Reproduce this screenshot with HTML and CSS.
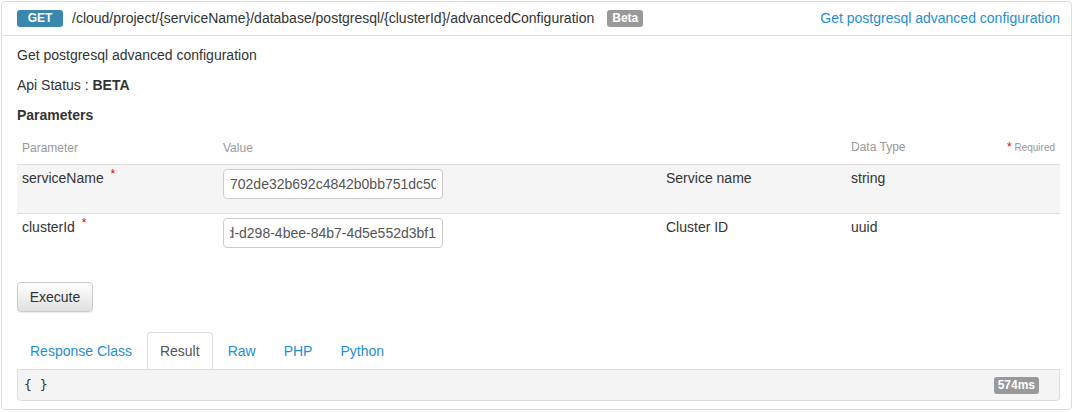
FILE: index.html
```html
<!DOCTYPE html>
<html>
<head>
<meta charset="utf-8">
<link rel="stylesheet" href="styles.css">
</head>
<body>
<div class="panel">
  <div class="panel-head">
    <span class="verb">GET</span>
    <span class="path">/cloud/project/{serviceName}/database/postgresql/{clusterId}/advancedConfiguration</span>
    <span class="badge beta">Beta</span>
    <a class="summary" href="#">Get postgresql advanced configuration</a>
  </div>
  <div class="panel-body">
    <p class="line">Get postgresql advanced configuration</p>
    <p class="line">Api Status : <strong>BETA</strong></p>
    <h4 class="line heading">Parameters</h4>
    <table class="params">
      <colgroup>
        <col class="c1"><col class="c2"><col class="c3"><col class="c4">
      </colgroup>
      <thead>
        <tr>
          <th>Parameter</th>
          <th>Value</th>
          <th></th>
          <th><div class="th-split"><span>Data Type</span><span class="req-note"><span class="star">*</span> Required</span></div></th>
        </tr>
      </thead>
      <tbody>
        <tr class="alt">
          <td>serviceName <sup class="star">*</sup></td>
          <td class="input-cell"><input class="field" type="text" value="702de32b692c4842b0bb751dc50"></td>
          <td>Service name</td>
          <td>string</td>
        </tr>
        <tr>
          <td>clusterId <sup class="star">*</sup></td>
          <td class="input-cell"><input class="field field-end" type="text" value="d-d298-4bee-84b7-4d5e552d3bf1"></td>
          <td>Cluster ID</td>
          <td>uuid</td>
        </tr>
      </tbody>
    </table>
    <button class="btn">Execute</button>
    <ul class="tabs">
      <li><a href="#">Response Class</a></li>
      <li class="active"><a href="#">Result</a></li>
      <li><a href="#">Raw</a></li>
      <li><a href="#">PHP</a></li>
      <li><a href="#">Python</a></li>
    </ul>
    <div class="result">
      <code class="json">{ }</code>
      <span class="badge time">574ms</span>
    </div>
  </div>
</div>
</body>
</html>
```

FILE: styles.css
```css
* { box-sizing: border-box; }
html, body { margin: 0; padding: 0; background: #fff; }
body {
  font-family: "Liberation Sans", Arial, sans-serif;
  font-size: 14px;
  line-height: 20px;
  color: #333;
}
.panel {
  margin: 1px;
  width: 1071px;
  height: 409px;
  border: 1px solid #ddd;
  border-radius: 4px;
}
.panel-head {
  display: flex;
  align-items: center;
  height: 34px;
  padding: 0 11px 1px 15px;
  border-bottom: 1px solid #ddd;
}
.verb {
  display: inline-block;
  width: 46px;
  height: 17px;
  line-height: 17px;
  text-align: center;
  background: #3a87ad;
  color: #fff;
  font-weight: bold;
  font-size: 12px;
  border-radius: 3px;
  margin-right: 9px;
}
.path { color: #333; font-size: 14px; }
.badge {
  display: inline-block;
  height: 17px;
  line-height: 17px;
  padding: 0 5px;
  background: #999;
  color: #fff;
  font-weight: bold;
  font-size: 12px;
  border-radius: 3px;
}
.beta { margin-left: 13px; }
.summary {
  margin-left: auto;
  color: #1f8ed2;
  text-decoration: none;
}
.panel-body { padding: 9px 10px 8px 15px; }
.line { margin: 0 0 10px; font-size: 14px; line-height: 20px; }
.heading { font-weight: bold; margin-bottom: 10px; }
.params {
  width: 1043px;
  border-collapse: collapse;
  table-layout: fixed;
}
.c1 { width: 201px; }
.c2 { width: 443px; }
.c3 { width: 185px; }
.c4 { width: 214px; }
.params th {
  text-align: left;
  font-weight: normal;
  font-size: 12px;
  line-height: 16px;
  color: #999;
  padding: 4px 5px 8px;
}
.th-split { display: flex; justify-content: space-between; }
.req-note { font-size: 10px; }
.star { color: #e00; font-size: 12px; }
.params td {
  vertical-align: top;
  border-top: 1px solid #ddd;
  padding: 3px 5px 15px;
  line-height: 20px;
}
.params td.input-cell { padding: 4px 5px 14px; }
.params tr.alt td { background: #f5f5f5; }
.params sup.star { vertical-align: top; position: relative; top: -4px; margin-left: 3px; }
.field {
  display: block;
  width: 220px;
  height: 30px;
  border: 1px solid #ccc;
  border-radius: 4px;
  padding: 0 6px;
  font-family: "Liberation Sans", Arial, sans-serif;
  font-size: 14px;
  color: #555;
  background: #fff;
}
.field-end { direction: rtl; text-align: left; }
.btn {
  display: block;
  margin-top: 20px;
  width: 76px;
  height: 30px;
  font-family: "Liberation Sans", Arial, sans-serif;
  font-size: 14px;
  color: #333;
  border: 1px solid #ccc;
  border-radius: 4px;
  background: linear-gradient(#fff, #e0e0e0);
  box-shadow: 0 1px 1px rgba(0,0,0,0.08);
}
.tabs {
  list-style: none;
  margin: 20px 0 0;
  padding: 0;
  display: flex;
}
.tabs li { margin-right: 2px; }
.tabs a {
  display: block;
  padding: 8px 12px;
  line-height: 20px;
  border: 1px solid transparent;
  border-bottom: 0;
  border-radius: 4px 4px 0 0;
  color: #1f8ed2;
  text-decoration: none;
}
.tabs li.active a {
  border-color: #ddd;
  color: #555;
  background: #fff;
}
.result {
  display: flex;
  justify-content: space-between;
  align-items: center;
  width: 1043px;
  height: 32px;
  padding: 0 20px 0 6px;
  background: #f4f4f4;
  border: 1px solid #ddd;
  border-radius: 0 0 4px 4px;
}
.json {
  font-family: "DejaVu Sans Mono", "Liberation Mono", monospace;
  font-size: 13px;
  color: #333;
}
.time { padding: 0 4px; }
```
